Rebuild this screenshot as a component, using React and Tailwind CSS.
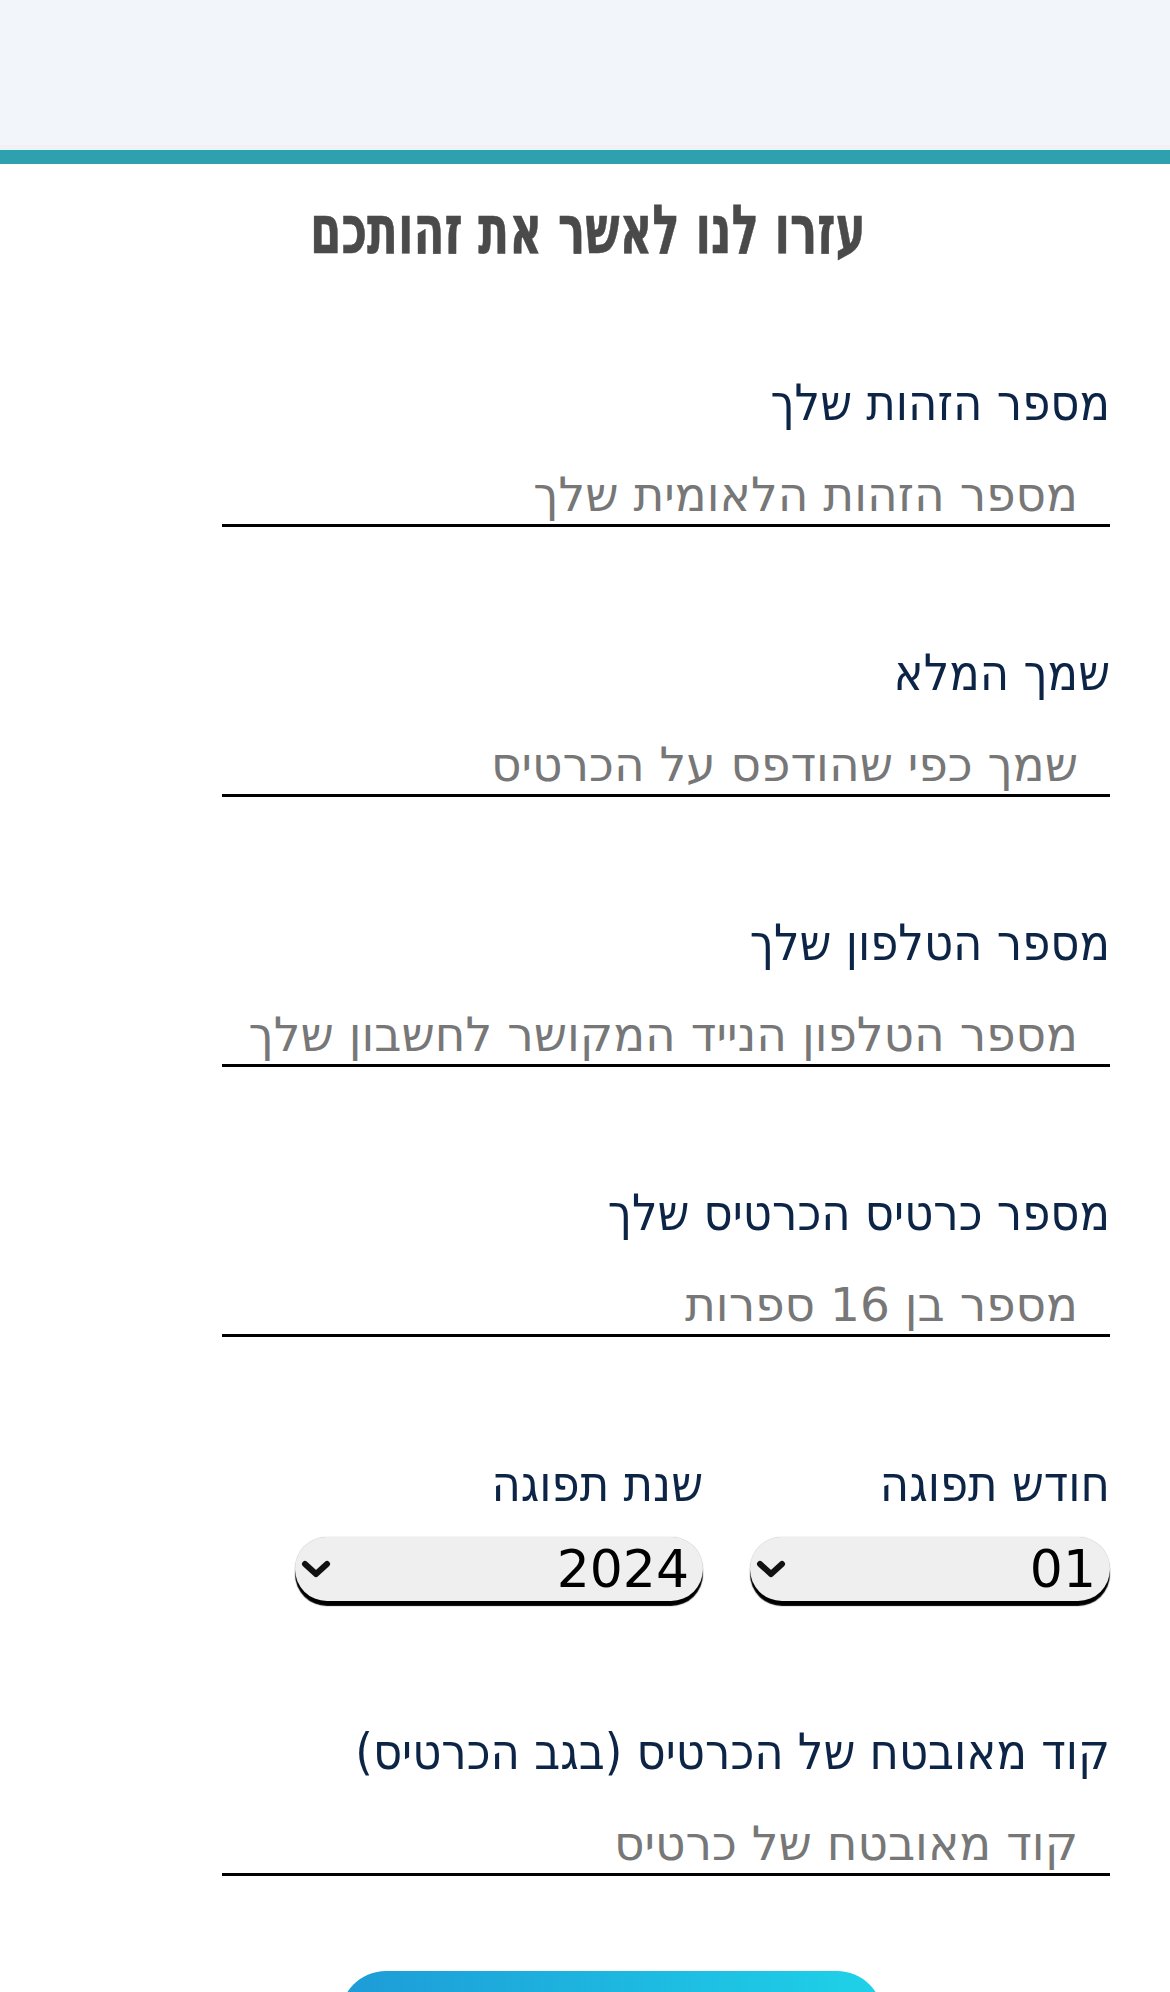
import React from "react";

const labelCls =
  "block text-[50px] leading-[58px] text-[#0c2446] [font-family:'DejaVu_Sans_Condensed','DejaVu_Sans',sans-serif]";
const inputCls =
  "block w-full h-[63px] border-0 border-b-[3px] border-black bg-transparent pr-[32px] pl-2 text-[47px] leading-[55px] text-black outline-none placeholder:text-[#777777] [font-family:'DejaVu_Sans',sans-serif]";

function Field({ label, placeholder, className = "" }) {
  return (
    <div className={className}>
      <label className={labelCls}>{label}</label>
      <input className={`${inputCls} mt-[32px]`} placeholder={placeholder} />
    </div>
  );
}

function Chevron() {
  return (
    <svg width="30" height="20" viewBox="0 0 30 20" className="shrink-0">
      <polyline
        points="4,5 15,15 26,5"
        fill="none"
        stroke="#111"
        strokeWidth="6"
        strokeLinecap="round"
        strokeLinejoin="round"
      />
    </svg>
  );
}

function SelectBox({ value, width }) {
  return (
    <div
      className={`${width} h-[64px] rounded-full bg-[#efefef] shadow-[0_5px_1px_#000,0_0_1px_rgba(0,0,0,0.35)] flex flex-row-reverse items-center justify-between pl-[6px] pr-[14px]`}
      dir="ltr"
    >
      <span className="text-[52px] leading-none text-black [font-family:'DejaVu_Sans',sans-serif]">
        {value}
      </span>
      <Chevron />
    </div>
  );
}

export default function App() {
  return (
    <div className="w-[1170px] min-h-[1992px] bg-white overflow-hidden">
      <div className="h-[145px] bg-[#f2f6fa]" />
      <div className="h-[2px] bg-[#fbeef2]" />
      <div className="h-[3px] bg-[#e6f6f9]" />
      <div className="h-[14px] bg-[#2fa0ae]" />
      <div className="mt-[32px] flex justify-center pl-[6px]">
        <h1
          dir="rtl"
          className="inline-block whitespace-nowrap scale-x-[0.665] text-[68px] leading-none font-bold text-[#4a4a4a] [font-family:'DejaVu_Sans',sans-serif] [-webkit-text-stroke:0.6px_#4a4a4a]"
        >
          עזרו לנו לאשר את זהותכם
        </h1>
      </div>

      <form dir="rtl" className="pl-[222px] pr-[60px] pt-[110px]">
        <Field label="מספר הזהות שלך" placeholder="מספר הזהות הלאומית שלך" />
        <Field
          className="mt-[117px]"
          label="שמך המלא"
          placeholder="שמך כפי שהודפס על הכרטיס"
        />
        <Field
          className="mt-[117px]"
          label="מספר הטלפון שלך"
          placeholder="מספר הטלפון הנייד המקושר לחשבון שלך"
        />
        <Field
          className="mt-[117px]"
          label="מספר כרטיס הכרטיס שלך"
          placeholder="מספר בן 16 ספרות"
        />

        <div className="mt-[118px] flex gap-[47px]">
          <div className="w-[360px]">
            <label className={labelCls}>חודש תפוגה</label>
            <div className="mt-[24px]">
              <SelectBox value="01" width="w-[360px]" />
            </div>
          </div>
          <div className="w-[408px]">
            <label className={labelCls}>שנת תפוגה</label>
            <div className="mt-[24px]">
              <SelectBox value="2024" width="w-[408px]" />
            </div>
          </div>
        </div>

        <Field
          className="mt-[122px]"
          label="קוד מאובטח של הכרטיס (בגב הכרטיס)"
          placeholder="קוד מאובטח של כרטיס"
        />

        <button
          type="button"
          aria-label="המשך"
          className="mt-[95px] mr-[227px] block w-[543px] h-[92px] rounded-[46px] bg-linear-to-r from-[#1e9bd7] to-[#1fd2e8]"
        />
      </form>
    </div>
  );
}
